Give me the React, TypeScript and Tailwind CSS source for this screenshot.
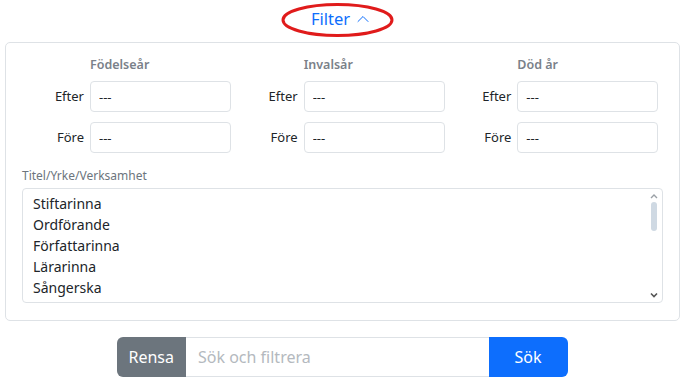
import { ChevronUp } from 'lucide-react';

const groups = [
  { title: 'Födelseår' },
  { title: 'Invalsår' },
  { title: 'Död år' },
];

const titles = ['Stiftarinna', 'Ordförande', 'Författarinna', 'Lärarinna', 'Sångerska'];

function YearGroup({ title }: { title: string }) {
  return (
    <div className="grid grid-cols-[68px_141px] gap-y-[10px]">
      <div />
      <div className="text-[12.5px] leading-[18px] font-semibold text-[#7a8189] mb-[-3px]">{title}</div>
      {['Efter', 'Före'].map((label) => (
        <div key={label} className="contents">
          <div className="flex items-center justify-end pr-[6px] text-[13px] text-[#212529]">{label}</div>
          <input
            defaultValue="---"
            className="h-[31px] w-full rounded-[4px] border border-[#dee2e6] bg-white px-[8px] text-[13px] text-[#212529] outline-none"
          />
        </div>
      ))}
    </div>
  );
}

function FakeScrollbar() {
  return (
    <div className="flex w-[12px] flex-col items-center justify-between py-[4px]">
      <svg width="8" height="6" viewBox="0 0 8 6">
        <path d="M1 5 L4 2 L7 5" fill="none" stroke="#9aa0a6" strokeWidth="1.4" />
      </svg>
      <div className="mb-auto mt-[3px] h-[29px] w-[6px] rounded-full bg-[#cfd9e3]" />
      <svg width="8" height="6" viewBox="0 0 8 6">
        <path d="M1 1.5 L4 4.5 L7 1.5" fill="none" stroke="#555" strokeWidth="1.6" />
      </svg>
    </div>
  );
}

export default function App() {
  return (
    <div className="min-h-[381px] bg-white" style={{ fontFamily: '"Noto Sans", "Open Sans", sans-serif' }}>
      <div className="relative flex h-[42px] items-center justify-center pb-[4px]">
        <button className="flex items-center gap-[3px] text-[16.5px] text-[#0d6efd]">
          Filter
          <ChevronUp size={20} strokeWidth={1.2} />
        </button>
        <svg className="pointer-events-none absolute left-[281px] top-[2px]" width="113" height="36" viewBox="0 0 113 36">
          <ellipse cx="56.5" cy="18" rx="54.5" ry="15.5" fill="none" stroke="#e01b1b" strokeWidth="3" />
        </svg>
      </div>

      <div className="mx-[5px] w-[675px] rounded-[5px] border border-[#dee2e6] px-[16px] pb-[17px] pt-[13px]">
        <div className="grid grid-cols-3">
          {groups.map((g) => (
            <YearGroup key={g.title} title={g.title} />
          ))}
        </div>

        <div className="mt-[14px] text-[12px] leading-[18px] text-[#6c757d]">Titel/Yrke/Verksamhet</div>
        <div className="mt-[3px] flex h-[115px] rounded-[4px] border border-[#dee2e6] pl-[10px] pr-[2px]">
          <div className="flex flex-1 flex-col py-[4px]">
            {titles.map((t) => (
              <div key={t} className="text-[14px] leading-[21px] text-[#212529]">
                {t}
              </div>
            ))}
          </div>
          <FakeScrollbar />
        </div>
      </div>

      <div className="mt-[16px] flex justify-center">
        <div className="flex h-[40px] w-[451px]">
          <button className="rounded-l-[6px] bg-[#6c757d] px-[12px] text-[16px] text-white">Rensa</button>
          <input
            placeholder="Sök och filtrera"
            className="min-w-0 flex-1 border-y border-[#dee2e6] px-[12px] text-[16px] text-[#212529] outline-none placeholder:text-[#b4b9be]"
          />
          <button className="w-[79px] rounded-r-[6px] bg-[#0d6efd] text-[16px] text-white">Sök</button>
        </div>
      </div>
    </div>
  );
}
